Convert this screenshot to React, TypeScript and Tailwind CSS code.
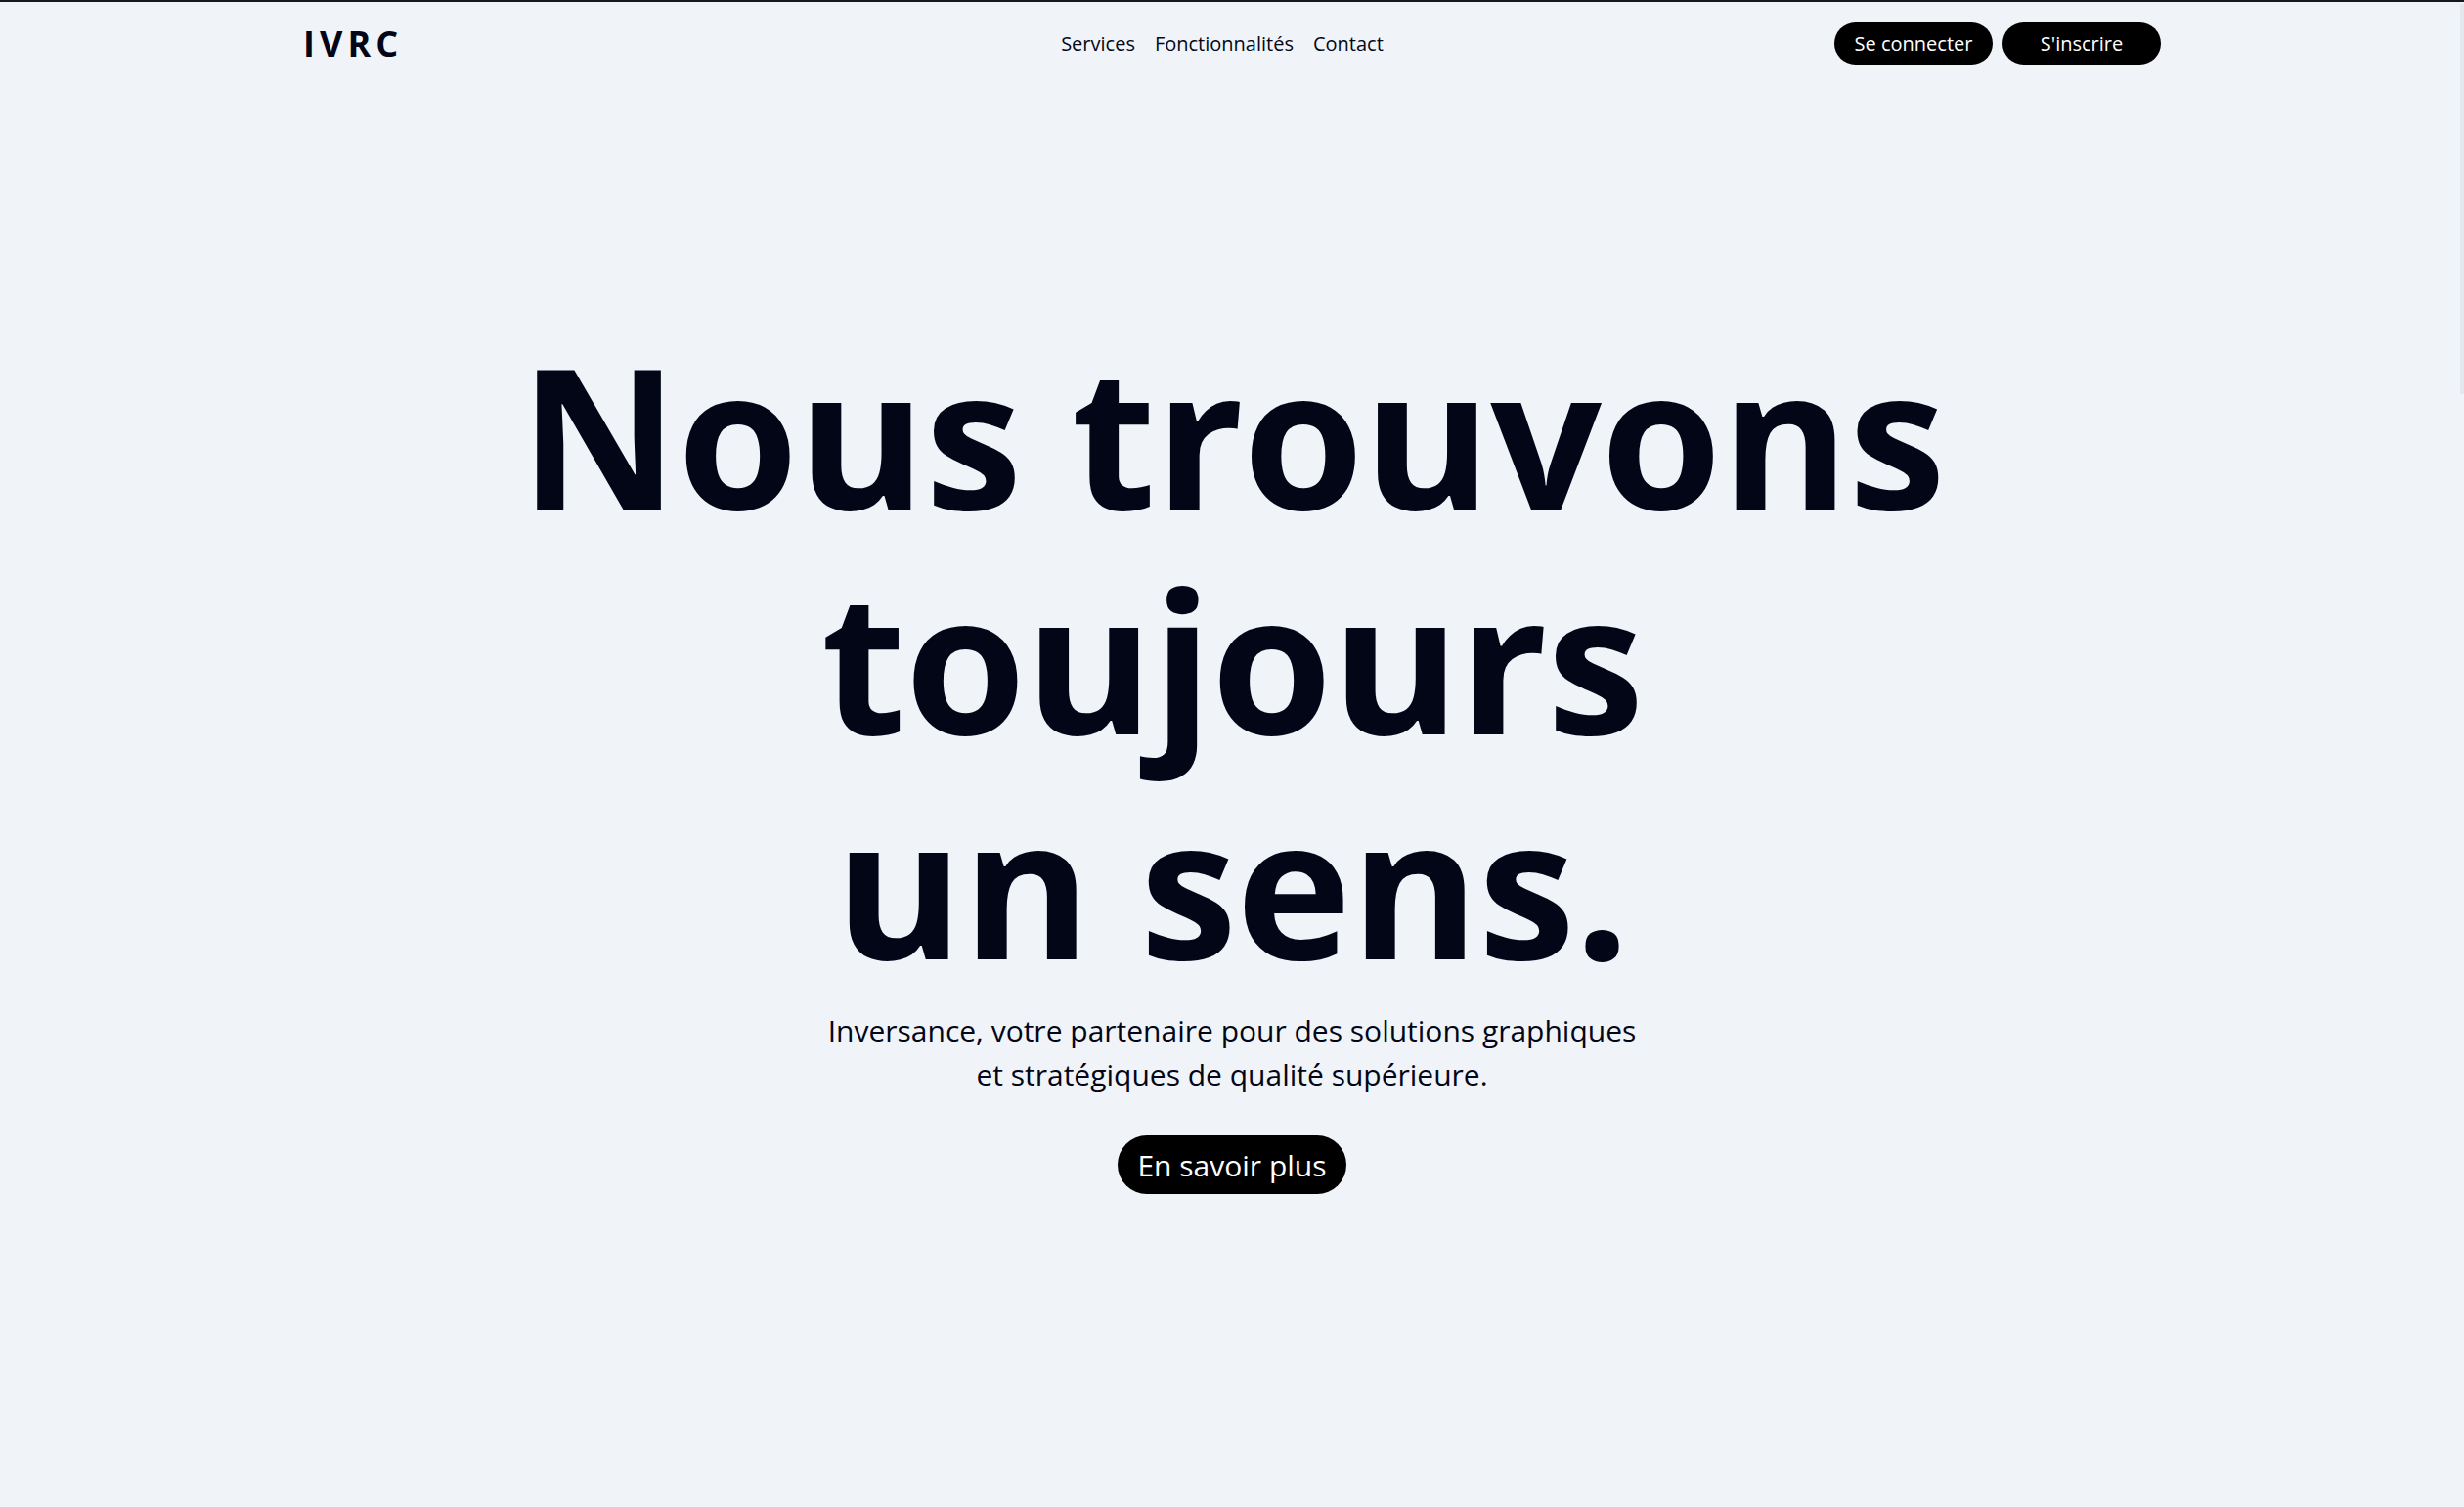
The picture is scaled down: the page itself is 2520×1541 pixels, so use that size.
import React from "react";

export default function App() {
  const font = { fontFamily: '"Open Sans", "Noto Sans", sans-serif' };
  return (
    <div className="min-h-screen bg-[#f0f4f9] text-[#020617] border-t-2 border-[#18181b]" style={font}>
      <header className="mx-auto w-full max-w-[1900px] pt-[21px] grid grid-cols-[1fr_auto_1fr] items-center">
        <div className="text-[36px] leading-[43px] font-bold tracking-[0.14em]">IVRC</div>
        <nav className="flex items-center gap-5 pr-5 text-[20px] leading-[28px]">
          <a href="#">Services</a>
          <a href="#">Fonctionnalités</a>
          <a href="#">Contact</a>
        </nav>
        <div className="flex justify-end gap-[10px]">
          <button className="w-[162px] h-[43px] rounded-full bg-black text-white text-[20px] leading-[28px]">
            Se connecter
          </button>
          <button className="w-[162px] h-[43px] rounded-full bg-black text-white text-[20px] leading-[28px]">
            S'inscrire
          </button>
        </div>
      </header>

      <main className="flex flex-col items-center pt-[263px]">
        <h1 className="text-center font-bold text-[200px] leading-[230px] tracking-[-0.005em]">
          Nous trouvons
          <br />
          toujours
          <br />
          un sens.
        </h1>
        <p className="mt-[12px] text-center text-[30px] leading-[45px]">
          Inversance, votre partenaire pour des solutions graphiques
          <br />
          et stratégiques de qualité supérieure.
        </p>
        <button className="mt-[40px] h-[60px] px-5 rounded-full bg-black text-white text-[30px] leading-[45px]">
          En savoir plus
        </button>
      </main>

      <div className="fixed right-0 top-[4px] w-[4px] h-[399px] bg-[#e3e8ef]" />
    </div>
  );
}
